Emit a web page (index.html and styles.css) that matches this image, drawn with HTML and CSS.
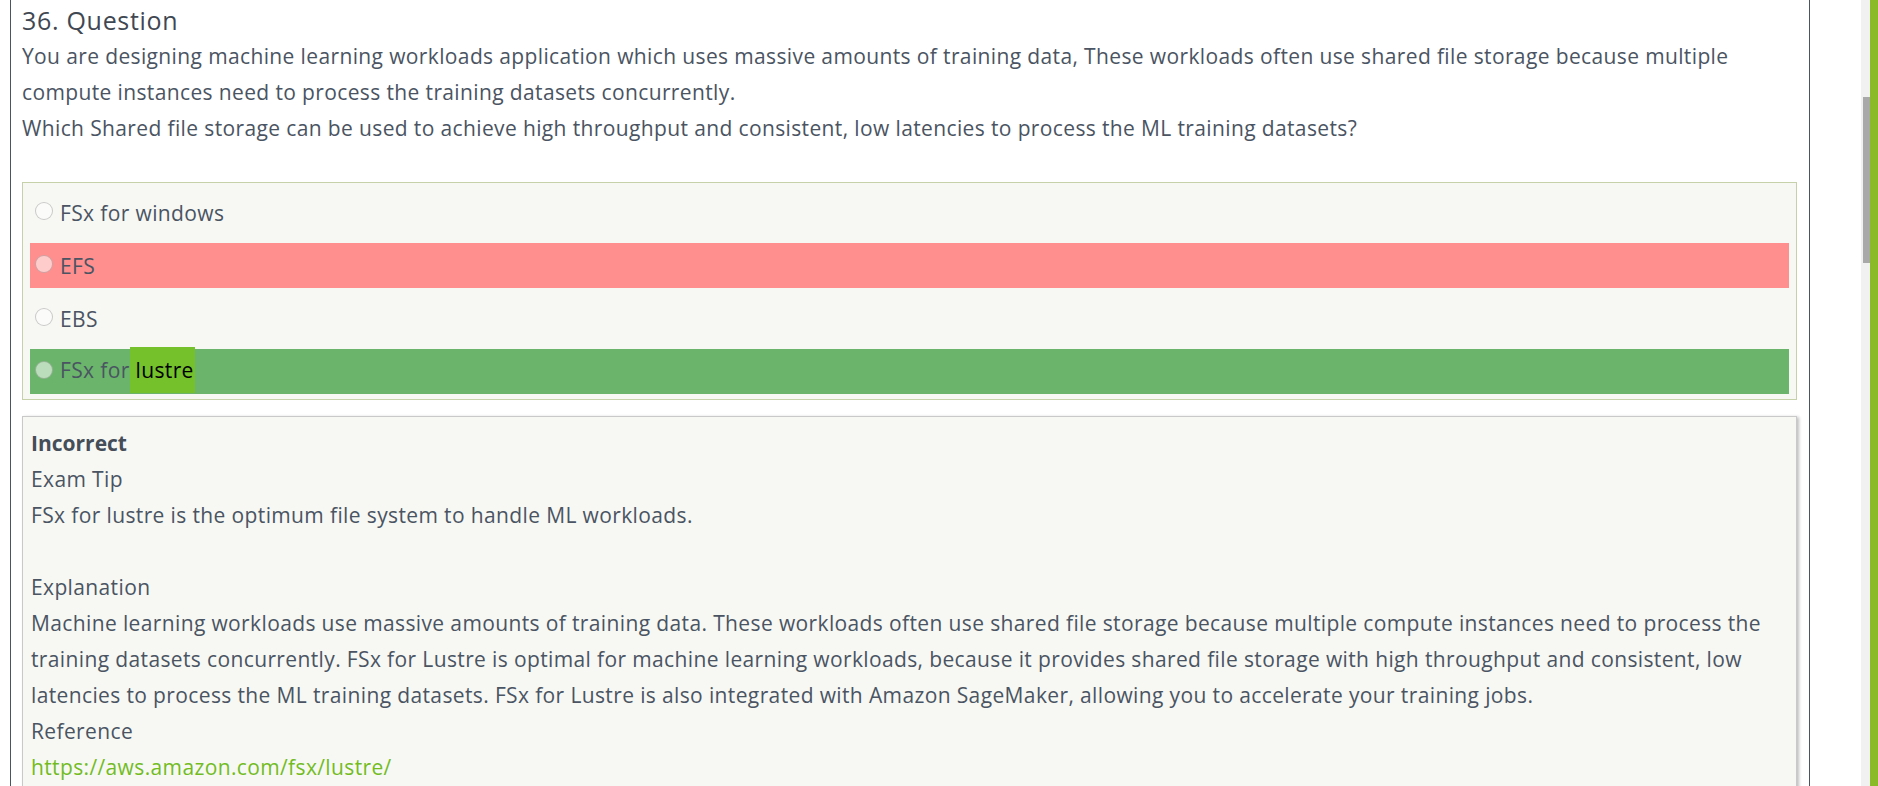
FILE: index.html
```html
<!DOCTYPE html>
<html lang="en">
<head>
<meta charset="utf-8">
<title>36. Question</title>
<link rel="stylesheet" href="styles.css">
</head>
<body>
<div class="page">
  <main class="quiz">
    <h2 class="q-title">36. Question</h2>
    <div class="q-text">
      <p>You are designing machine learning workloads application which uses massive amounts of training data, These workloads often use shared file storage because multiple compute instances need to process the training datasets concurrently.</p>
      <p>Which Shared file storage can be used to achieve high throughput and consistent, low latencies to process the ML training datasets?</p>
    </div>
    <ul class="options">
      <li class="option"><span class="radio"></span><span>FSx for windows</span></li>
      <li class="option wrong"><span class="radio"></span><span>EFS</span></li>
      <li class="option"><span class="radio"></span><span>EBS</span></li>
      <li class="option right"><span class="radio"></span><span>FSx for<mark class="hl">&nbsp;lustre</mark></span></li>
    </ul>
    <div class="explain">
      <p class="verdict">Incorrect</p>
      <p>Exam Tip</p>
      <p>FSx for lustre is the optimum file system to handle ML workloads.</p>
      <p class="blank">&nbsp;</p>
      <p>Explanation</p>
      <p>Machine learning workloads use massive amounts of training data. These workloads often use shared file storage because multiple compute instances need to process the training datasets concurrently. FSx for Lustre is optimal for machine learning workloads, because it provides shared file storage with high throughput and consistent, low latencies to process the ML training datasets. FSx for Lustre is also integrated with Amazon SageMaker, allowing you to accelerate your training jobs.</p>
      <p>Reference</p>
      <p><a class="link" href="#">https://aws.amazon.com/fsx/lustre/</a></p>
    </div>
  </main>
  <div class="gutter"></div>
  <div class="scrollbar"><div class="thumb"></div></div>
  <div class="accent"></div>
</div>
</body>
</html>
```

FILE: styles.css
```css
html, body {
  margin: 0;
  padding: 0;
  height: 786px;
  overflow: hidden;
  background: #ffffff;
}

body {
  font-family: "Open Sans", "Lato", sans-serif;
  color: #4a5462;
}

.page {
  display: flex;
  height: 786px;
}

.quiz {
  width: 1776px;
  flex: none;
  margin-left: 10px;
  padding: 0 11px;
  border-left: 1px solid #4b5561;
  border-right: 1px solid #4b5561;
  font-size: 21px;
  letter-spacing: 0.37px;
  line-height: 36px;
}

.q-title {
  margin: 0;
  font-size: 25px;
  letter-spacing: 0.7px;
  font-weight: 400;
  line-height: 36px;
  color: #3f4852;
  padding-top: 2px;
}

.q-text p {
  margin: 0;
}

.options {
  list-style: none;
  margin: 36px 0 0;
  padding: 7px 7px 5px;
  width: 1759px;
  border: 1px solid #c6d1a9;
  background: #f7f8f4;
  display: flex;
  flex-direction: column;
  gap: 8px;
}

.option {
  height: 45px;
  display: flex;
  align-items: center;
  padding-left: 5px;
}

.option.wrong {
  background: #ff8f8f;
}

.option.right {
  background: #6bb46b;
}

.radio {
  width: 16px;
  height: 16px;
  border-radius: 50%;
  border: 1px solid rgba(0, 0, 0, 0.2);
  background: rgba(255, 255, 255, 0.55);
  margin-right: 7px;
  margin-bottom: 4px;
  flex: none;
}

.hl {
  background: #74c12b;
  color: #000;
  display: inline-block;
  line-height: 46px;
  padding: 0 1px 0 0;
  margin-top: -3px;
}

.explain {
  margin-top: 16px;
  width: 1757px;
  padding: 8px 8px 40px;
  border: 1px solid #c9c9c9;
  background: #f7f8f4;
  box-shadow: 2px 1px 3px rgba(0, 0, 0, 0.25);
}

.explain p {
  margin: 0;
}

.verdict {
  font-weight: 700;
  letter-spacing: 0;
  color: #444d58;
}

.link {
  color: #72bc1f;
  text-decoration: none;
}

.gutter {
  width: 51px;
  flex: none;
}

.scrollbar {
  width: 9px;
  flex: none;
  background: #f1f1f1;
}

.thumb {
  margin-top: 97px;
  margin-left: 2px;
  width: 7px;
  height: 166px;
  background: #a9a9a9;
}

.accent {
  flex: 1;
  background: #8aba28;
}
```
